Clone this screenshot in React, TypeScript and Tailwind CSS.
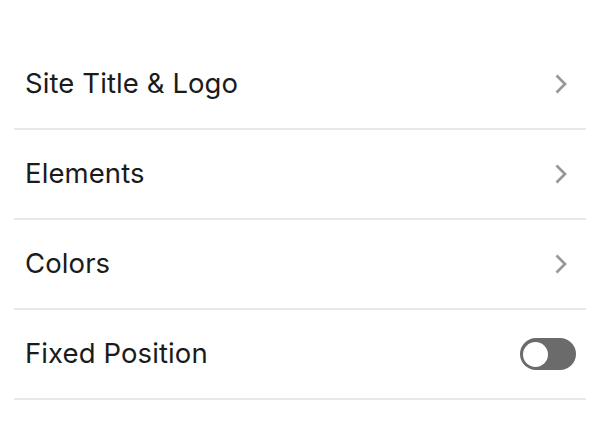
import { useState } from "react";

const rows = ["Site Title & Logo", "Elements", "Colors"];

function Chevron() {
  return (
    <svg width="14" height="20" viewBox="0 0 14 20" fill="none" className="text-[#979797]">
      <path d="M2.5 1.5 L11 10 L2.5 18.5" stroke="currentColor" strokeWidth="2.7" />
    </svg>
  );
}

export default function App() {
  const [fixed, setFixed] = useState(false);

  return (
    <div className="min-h-screen bg-white pl-[14px] pr-[18px] pt-[40px] font-['Inter',sans-serif] text-[#1b1b1b]">
      {rows.map((label) => (
        <div
          key={label}
          className="flex h-[90px] items-center justify-between border-b-2 border-[#e8e8e8] pl-[11px] pr-[18px]"
        >
          <span className="text-[27.5px] tracking-[0.1px]">{label}</span>
          <Chevron />
        </div>
      ))}
      <div className="flex h-[90px] items-center justify-between border-b-2 border-[#e8e8e8] pl-[11px] pr-[10px]">
        <span className="text-[27.5px] tracking-[0.1px]">Fixed Position</span>
        <button
          onClick={() => setFixed(!fixed)}
          className={`flex h-[32px] w-[56px] items-center rounded-full px-[3px] ${fixed ? "justify-end bg-[#1b1b1b]" : "justify-start bg-[#6b6b6b]"}`}
        >
          <span className="h-[25px] w-[25px] rounded-full bg-white" />
        </button>
      </div>
    </div>
  );
}
